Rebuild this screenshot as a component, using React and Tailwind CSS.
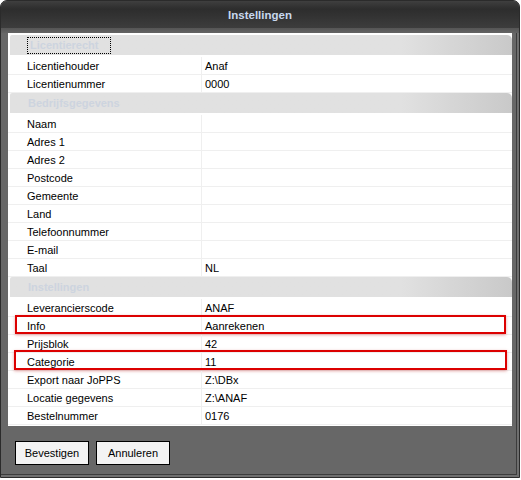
import React from 'react';

const sections = [
    {
        title: 'Licentierecht',
        focused: true,
        rows: [
            { label: 'Licentiehouder', value: 'Anaf' },
            { label: 'Licentienummer', value: '0000' },
        ],
    },
    {
        title: 'Bedrijfsgegevens',
        rows: [
            { label: 'Naam', value: '' },
            { label: 'Adres 1', value: '' },
            { label: 'Adres 2', value: '' },
            { label: 'Postcode', value: '' },
            { label: 'Gemeente', value: '' },
            { label: 'Land', value: '' },
            { label: 'Telefoonnummer', value: '' },
            { label: 'E-mail', value: '' },
            { label: 'Taal', value: 'NL' },
        ],
    },
    {
        title: 'Instellingen',
        rows: [
            { label: 'Leverancierscode', value: 'ANAF' },
            { label: 'Info', value: 'Aanrekenen', mark: 'info' },
            { label: 'Prijsblok', value: '42' },
            { label: 'Categorie', value: '11', mark: 'cat' },
            { label: 'Export naar JoPPS', value: 'Z:\\DBx' },
            { label: 'Locatie gegevens', value: 'Z:\\ANAF' },
            { label: 'Bestelnummer', value: '0176' },
        ],
    },
];

const SectionHeader = ({ title, focused, first }) => (
    <div className={`${first ? 'h-[24px] pt-[2px]' : 'h-[22px]'} pb-[2px]`}>
        <div className="h-[20px] ml-[2px] flex items-center pl-[18px] rounded-tl-[2px] rounded-tr-[5px] bg-linear-to-r from-[#e1e1e1] from-78% to-[#c9c9c9] text-[#cdd4df] font-bold">
            {focused ? (
                <span className="outline outline-1 outline-dotted outline-black px-[2px] pr-[12px] leading-[15px]">{title}</span>
            ) : (
                <span>{title}</span>
            )}
        </div>
    </div>
);

const Row = ({ label, value, mark }) => (
    <div className="relative h-[18px] flex border-b border-[#efefef]">
        <div className="w-[194px] pl-[19px] pt-[2px] flex items-center border-r border-[#efefef]">{label}</div>
        <div className="flex-1 pl-[3px] pt-[2px] flex items-center">{value}</div>
        {mark === 'info' && (
            <span className="absolute left-[7px] right-[6px] top-[-2px] bottom-[0px] border-2 border-[#dc0000] shadow-[0_1px_3px_rgba(180,0,0,0.35)]" />
        )}
        {mark === 'cat' && (
            <span className="absolute left-[6px] right-[5px] top-[-3px] bottom-[0px] border-2 border-[#dc0000] shadow-[0_1px_3px_rgba(180,0,0,0.35)]" />
        )}
    </div>
);

const App = () => {
    return (
        <div className="w-[521px] h-[480px] bg-white text-[11px] text-black" style={{ fontFamily: '"Liberation Sans", Arial, sans-serif' }}>
            <div className="w-[520px] h-[478px] flex flex-col rounded-t-[7px] border border-[#2b2b2b] bg-[#676767] overflow-hidden shadow-[inset_-2px_-2px_0_#6f6f6f,inset_-3px_-3px_0_#3c3c3c]">
                {/* Title bar */}
                <div className="h-[27px] shrink-0 flex items-center justify-center pt-[2px] bg-linear-to-b from-[#3f3f3f] via-[#2d2d2d] via-30% to-[#3d3d3d] text-[#c8d8ee] font-bold text-[11.5px]">
                    Instellingen
                </div>
                <div className="h-[5px] shrink-0 bg-linear-to-b from-[#555] to-[#636363]" />

                {/* Property grid */}
                <div className="px-[7px]">
                    <div className="h-[393px] bg-white overflow-hidden">
                        {sections.map((s, i) => (
                            <div key={s.title}>
                                <SectionHeader title={s.title} focused={s.focused} first={i === 0} />
                                {s.rows.map(r => (
                                    <Row key={r.label} {...r} />
                                ))}
                            </div>
                        ))}
                    </div>
                </div>

                {/* Buttons */}
                <div className="flex-1 flex items-start gap-[7px] pl-[14px] pt-[15px]">
                    <button className="w-[74px] h-[24px] bg-[#f3f3f3] border border-black text-[11px] text-black">Bevestigen</button>
                    <button className="w-[74px] h-[24px] bg-[#f3f3f3] border border-black text-[11px] text-black">Annuleren</button>
                </div>
            </div>
        </div>
    );
};

export default App;
